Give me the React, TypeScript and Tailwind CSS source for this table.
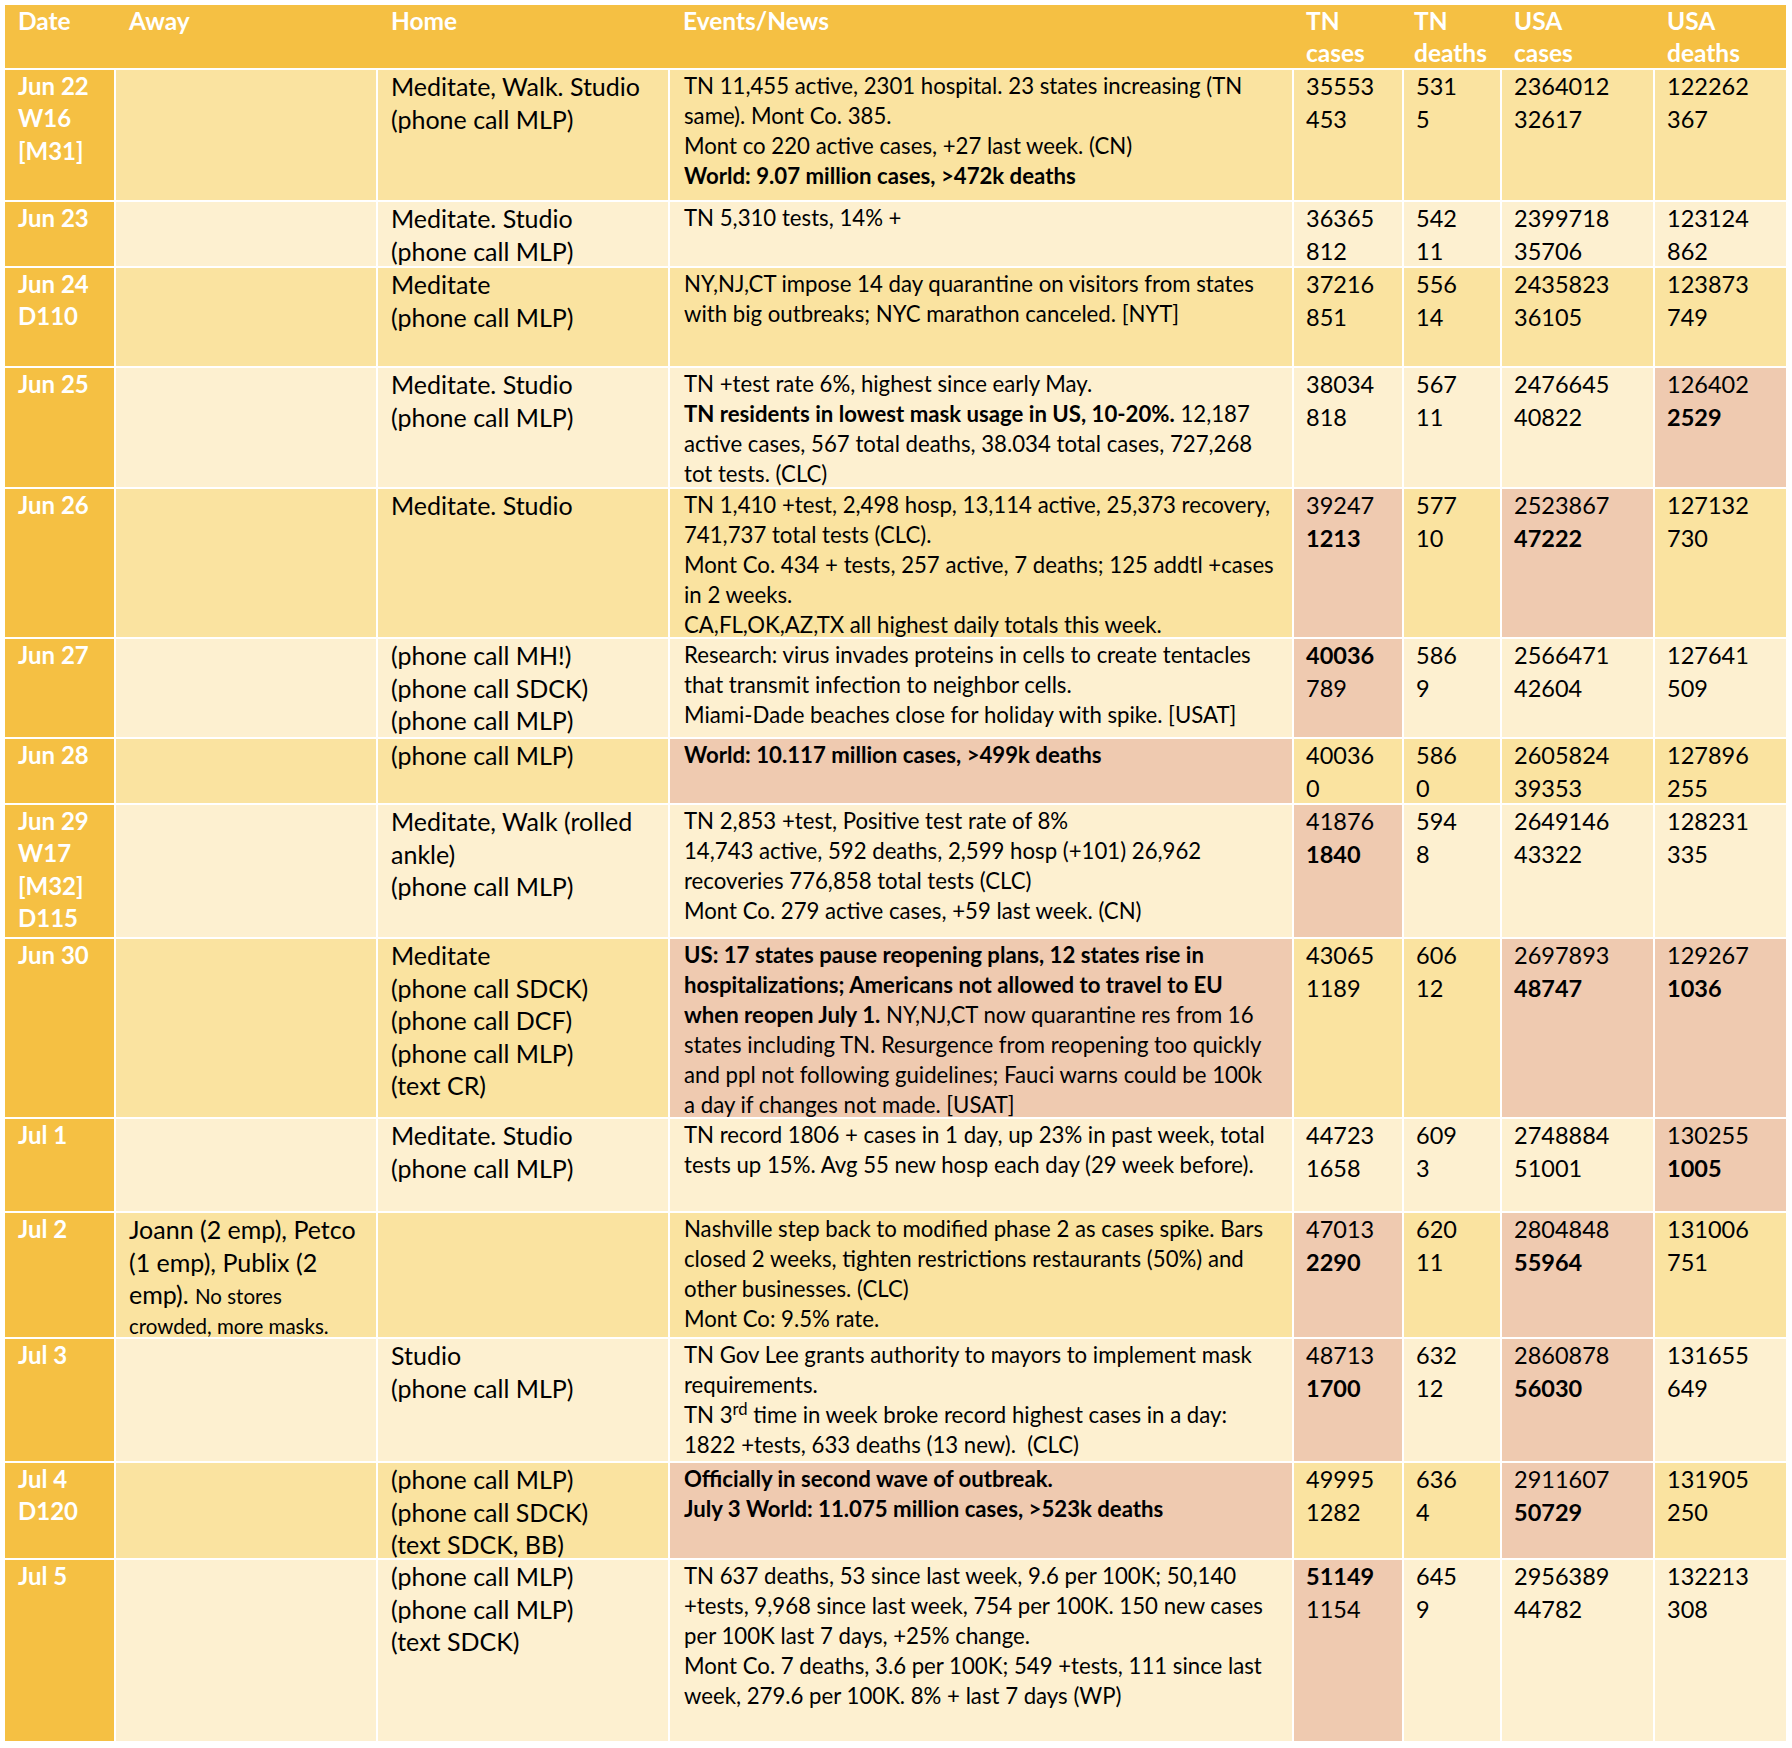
import React, { type FC, type ReactNode } from "react";

// column widths measured from the sheet, 2px white rules between cells
const COLS =
  "grid grid-cols-[109px_260px_290px_622px_108px_96px_151px_131px] grid-rows-[minmax(0,1fr)] gap-x-[2px]";

interface NumCell {
  v: [string, string];
  bold?: 0 | 1;
  pink?: boolean;
}

interface Row {
  date: string[];
  h: string;
  band: "dark" | "light";
  away?: ReactNode;
  home: string[];
  events: ReactNode[];
  eventsPink?: boolean;
  tnCases: NumCell;
  tnDeaths: NumCell;
  usaCases: NumCell;
  usaDeaths: NumCell;
}

const B: FC<{ children: ReactNode }> = ({ children }) => (
  <span className="font-bold">{children}</span>
);

const rows: Row[] = [
  {
    date: ["Jun 22", "W16", "[M31]"],
    h: "h-[130px]",
    band: "dark",
    home: ["Meditate, Walk. Studio", "(phone call MLP)"],
    events: [
      "TN 11,455 active, 2301 hospital. 23 states increasing (TN",
      "same). Mont Co. 385.",
      "Mont co 220 active cases, +27 last week. (CN)",
      <B>World: 9.07 million cases, &gt;472k deaths</B>,
    ],
    tnCases: { v: ["35553", "453"] },
    tnDeaths: { v: ["531", "5"] },
    usaCases: { v: ["2364012", "32617"] },
    usaDeaths: { v: ["122262", "367"] },
  },
  {
    date: ["Jun 23"],
    h: "h-[64px]",
    band: "light",
    home: ["Meditate. Studio", "(phone call MLP)"],
    events: ["TN 5,310 tests, 14% +"],
    tnCases: { v: ["36365", "812"] },
    tnDeaths: { v: ["542", "11"] },
    usaCases: { v: ["2399718", "35706"] },
    usaDeaths: { v: ["123124", "862"] },
  },
  {
    date: ["Jun 24", "D110"],
    h: "h-[98px]",
    band: "dark",
    home: ["Meditate", "(phone call MLP)"],
    events: [
      "NY,NJ,CT impose 14 day quarantine on visitors from states",
      "with big outbreaks; NYC marathon canceled. [NYT]",
    ],
    tnCases: { v: ["37216", "851"] },
    tnDeaths: { v: ["556", "14"] },
    usaCases: { v: ["2435823", "36105"] },
    usaDeaths: { v: ["123873", "749"] },
  },
  {
    date: ["Jun 25"],
    h: "h-[119px]",
    band: "light",
    home: ["Meditate. Studio", "(phone call MLP)"],
    events: [
      "TN +test rate 6%, highest since early May.",
      <>
        <B>TN residents in lowest mask usage in US, 10-20%.</B> 12,187
      </>,
      "active cases, 567 total deaths, 38.034 total cases, 727,268",
      "tot tests. (CLC)",
    ],
    tnCases: { v: ["38034", "818"] },
    tnDeaths: { v: ["567", "11"] },
    usaCases: { v: ["2476645", "40822"] },
    usaDeaths: { v: ["126402", "2529"], bold: 1, pink: true },
  },
  {
    date: ["Jun 26"],
    h: "h-[148px]",
    band: "dark",
    home: ["Meditate. Studio"],
    events: [
      "TN 1,410 +test, 2,498 hosp, 13,114 active, 25,373 recovery,",
      "741,737 total tests (CLC).",
      "Mont Co. 434 + tests, 257 active, 7 deaths; 125 addtl +cases",
      "in 2 weeks.",
      "CA,FL,OK,AZ,TX all highest daily totals this week.",
    ],
    tnCases: { v: ["39247", "1213"], bold: 1, pink: true },
    tnDeaths: { v: ["577", "10"] },
    usaCases: { v: ["2523867", "47222"], bold: 1, pink: true },
    usaDeaths: { v: ["127132", "730"] },
  },
  {
    date: ["Jun 27"],
    h: "h-[98px]",
    band: "light",
    home: ["(phone call MH!)", "(phone call SDCK)", "(phone call MLP)"],
    events: [
      "Research: virus invades proteins in cells to create tentacles",
      "that transmit infection to neighbor cells.",
      "Miami-Dade beaches close for holiday with spike. [USAT]",
    ],
    tnCases: { v: ["40036", "789"], bold: 0, pink: true },
    tnDeaths: { v: ["586", "9"] },
    usaCases: { v: ["2566471", "42604"] },
    usaDeaths: { v: ["127641", "509"] },
  },
  {
    date: ["Jun 28"],
    h: "h-[64px]",
    band: "dark",
    home: ["(phone call MLP)"],
    events: [<B>World: 10.117 million cases, &gt;499k deaths</B>],
    eventsPink: true,
    tnCases: { v: ["40036", "0"] },
    tnDeaths: { v: ["586", "0"] },
    usaCases: { v: ["2605824", "39353"] },
    usaDeaths: { v: ["127896", "255"] },
  },
  {
    date: ["Jun 29", "W17", "[M32]", "D115"],
    h: "h-[132px]",
    band: "light",
    home: ["Meditate, Walk (rolled", "ankle)", "(phone call MLP)"],
    events: [
      "TN 2,853 +test, Positive test rate of 8%",
      "14,743 active, 592 deaths, 2,599 hosp (+101) 26,962",
      "recoveries 776,858 total tests (CLC)",
      "Mont Co. 279 active cases, +59 last week. (CN)",
    ],
    tnCases: { v: ["41876", "1840"], bold: 1, pink: true },
    tnDeaths: { v: ["594", "8"] },
    usaCases: { v: ["2649146", "43322"] },
    usaDeaths: { v: ["128231", "335"] },
  },
  {
    date: ["Jun 30"],
    h: "h-[178px]",
    band: "dark",
    home: [
      "Meditate",
      "(phone call SDCK)",
      "(phone call DCF)",
      "(phone call MLP)",
      "(text CR)",
    ],
    events: [
      <B>US: 17 states pause reopening plans, 12 states rise in</B>,
      <B>hospitalizations; Americans not allowed to travel to EU</B>,
      <>
        <B>when reopen July 1.</B> NY,NJ,CT now quarantine res from 16
      </>,
      "states including TN. Resurgence from reopening too quickly",
      "and ppl not following guidelines; Fauci warns could be 100k",
      "a day if changes not made. [USAT]",
    ],
    eventsPink: true,
    tnCases: { v: ["43065", "1189"] },
    tnDeaths: { v: ["606", "12"] },
    usaCases: { v: ["2697893", "48747"], bold: 1, pink: true },
    usaDeaths: { v: ["129267", "1036"], bold: 1, pink: true },
  },
  {
    date: ["Jul 1"],
    h: "h-[92px]",
    band: "light",
    home: ["Meditate. Studio", "(phone call MLP)"],
    events: [
      "TN record 1806 + cases in 1 day, up 23% in past week, total",
      "tests up 15%. Avg 55 new hosp each day (29 week before).",
    ],
    tnCases: { v: ["44723", "1658"] },
    tnDeaths: { v: ["609", "3"] },
    usaCases: { v: ["2748884", "51001"] },
    usaDeaths: { v: ["130255", "1005"], bold: 1, pink: true },
  },
  {
    date: ["Jul 2"],
    h: "h-[124px]",
    band: "dark",
    away: (
      <>
        <div>Joann (2 emp), Petco</div>
        <div>(1 emp), Publix (2</div>
        <div>
          emp). <span className="text-[20.5px]">No stores</span>
        </div>
        <div className="text-[20.5px] leading-[26px]">crowded, more masks.</div>
      </>
    ),
    home: [],
    events: [
      "Nashville step back to modified phase 2 as cases spike. Bars",
      "closed 2 weeks, tighten restrictions restaurants (50%) and",
      "other businesses. (CLC)",
      "Mont Co: 9.5% rate.",
    ],
    tnCases: { v: ["47013", "2290"], bold: 1, pink: true },
    tnDeaths: { v: ["620", "11"] },
    usaCases: { v: ["2804848", "55964"], bold: 1, pink: true },
    usaDeaths: { v: ["131006", "751"] },
  },
  {
    date: ["Jul 3"],
    h: "h-[122px]",
    band: "light",
    home: ["Studio", "(phone call MLP)"],
    events: [
      "TN Gov Lee grants authority to mayors to implement mask",
      "requirements.",
      <>
        TN 3<sup>rd</sup> time in week broke record highest cases in a day:
      </>,
      "1822 +tests, 633 deaths (13 new).\u00a0 (CLC)",
    ],
    tnCases: { v: ["48713", "1700"], bold: 1, pink: true },
    tnDeaths: { v: ["632", "12"] },
    usaCases: { v: ["2860878", "56030"], bold: 1, pink: true },
    usaDeaths: { v: ["131655", "649"] },
  },
  {
    date: ["Jul 4", "D120"],
    h: "h-[95px]",
    band: "dark",
    home: ["(phone call MLP)", "(phone call SDCK)", "(text SDCK, BB)"],
    events: [
      <B>Officially in second wave of outbreak.</B>,
      <B>July 3 World: 11.075 million cases, &gt;523k deaths</B>,
    ],
    eventsPink: true,
    tnCases: { v: ["49995", "1282"] },
    tnDeaths: { v: ["636", "4"] },
    usaCases: { v: ["2911607", "50729"], bold: 1, pink: true },
    usaDeaths: { v: ["131905", "250"] },
  },
  {
    date: ["Jul 5"],
    h: "h-[181px]",
    band: "light",
    home: ["(phone call MLP)", "(phone call MLP)", "(text SDCK)"],
    events: [
      "TN 637 deaths, 53 since last week, 9.6 per 100K; 50,140",
      "+tests, 9,968 since last week, 754 per 100K. 150 new cases",
      "per 100K last 7 days, +25% change.",
      "Mont Co. 7 deaths, 3.6 per 100K; 549 +tests, 111 since last",
      "week, 279.6 per 100K. 8% + last 7 days (WP)",
    ],
    tnCases: { v: ["51149", "1154"], bold: 0, pink: true },
    tnDeaths: { v: ["645", "9"] },
    usaCases: { v: ["2956389", "44782"] },
    usaDeaths: { v: ["132213", "308"] },
  },
];

const bandBg = (band: Row["band"]) =>
  band === "dark" ? "bg-[#FAE3A0]" : "bg-[#FDF0D0]";

const Num: FC<{ cell: NumCell; band: Row["band"] }> = ({ cell, band }) => (
  <div
    className={`pl-[12px] text-[23.5px] leading-[32.6px] ${
      cell.pink ? "bg-[#EFCAB0]" : bandBg(band)
    }`}
  >
    {cell.v.map((t, i) => (
      <div key={i} className={cell.bold === i ? "font-bold" : ""}>
        {t}
      </div>
    ))}
  </div>
);

const App: FC = () => {
  return (
    <div className="min-h-screen bg-white pt-[5px] pl-[5px] font-['Lato',sans-serif] text-black">
      <div className="w-[1781px] flex flex-col gap-y-[2px] whitespace-nowrap">
        {/* header */}
        <div
          className={`${COLS} h-[63px] bg-[#F5C043] text-white font-bold text-[24.5px] leading-[32px]`}
        >
          <div className="pl-[13px]">Date</div>
          <div className="pl-[13px]">Away</div>
          <div className="pl-[13px]">Home</div>
          <div className="pl-[13px]">Events/News</div>
          <div className="pl-[12px]">
            <div>TN</div>
            <div>cases</div>
          </div>
          <div className="pl-[10px]">
            <div>TN</div>
            <div>deaths</div>
          </div>
          <div className="pl-[12px]">
            <div>USA</div>
            <div>cases</div>
          </div>
          <div className="pl-[12px]">
            <div>USA</div>
            <div>deaths</div>
          </div>
        </div>

        {rows.map((row, idx) => (
          <div key={idx} className={`${COLS} ${row.h}`}>
            <div className="bg-[#F5C043] pl-[13px] text-white font-bold text-[24px] leading-[32.3px]">
              {row.date.map((d) => (
                <div key={d}>{d}</div>
              ))}
            </div>
            <div
              className={`pl-[13px] text-[25px] leading-[32.6px] ${bandBg(row.band)}`}
            >
              {row.away}
            </div>
            <div
              className={`pl-[13px] text-[25px] leading-[32.6px] ${bandBg(row.band)}`}
            >
              {row.home.map((l, i) => (
                <div key={i}>{l}</div>
              ))}
            </div>
            <div
              className={`pl-[14px] pt-[1px] text-[22.2px] leading-[30.1px] ${
                row.eventsPink ? "bg-[#EFCAB0]" : bandBg(row.band)
              }`}
            >
              {row.events.map((l, i) => (
                <div key={i}>{l}</div>
              ))}
            </div>
            <Num cell={row.tnCases} band={row.band} />
            <Num cell={row.tnDeaths} band={row.band} />
            <Num cell={row.usaCases} band={row.band} />
            <Num cell={row.usaDeaths} band={row.band} />
          </div>
        ))}
      </div>
    </div>
  );
};

export default App;
